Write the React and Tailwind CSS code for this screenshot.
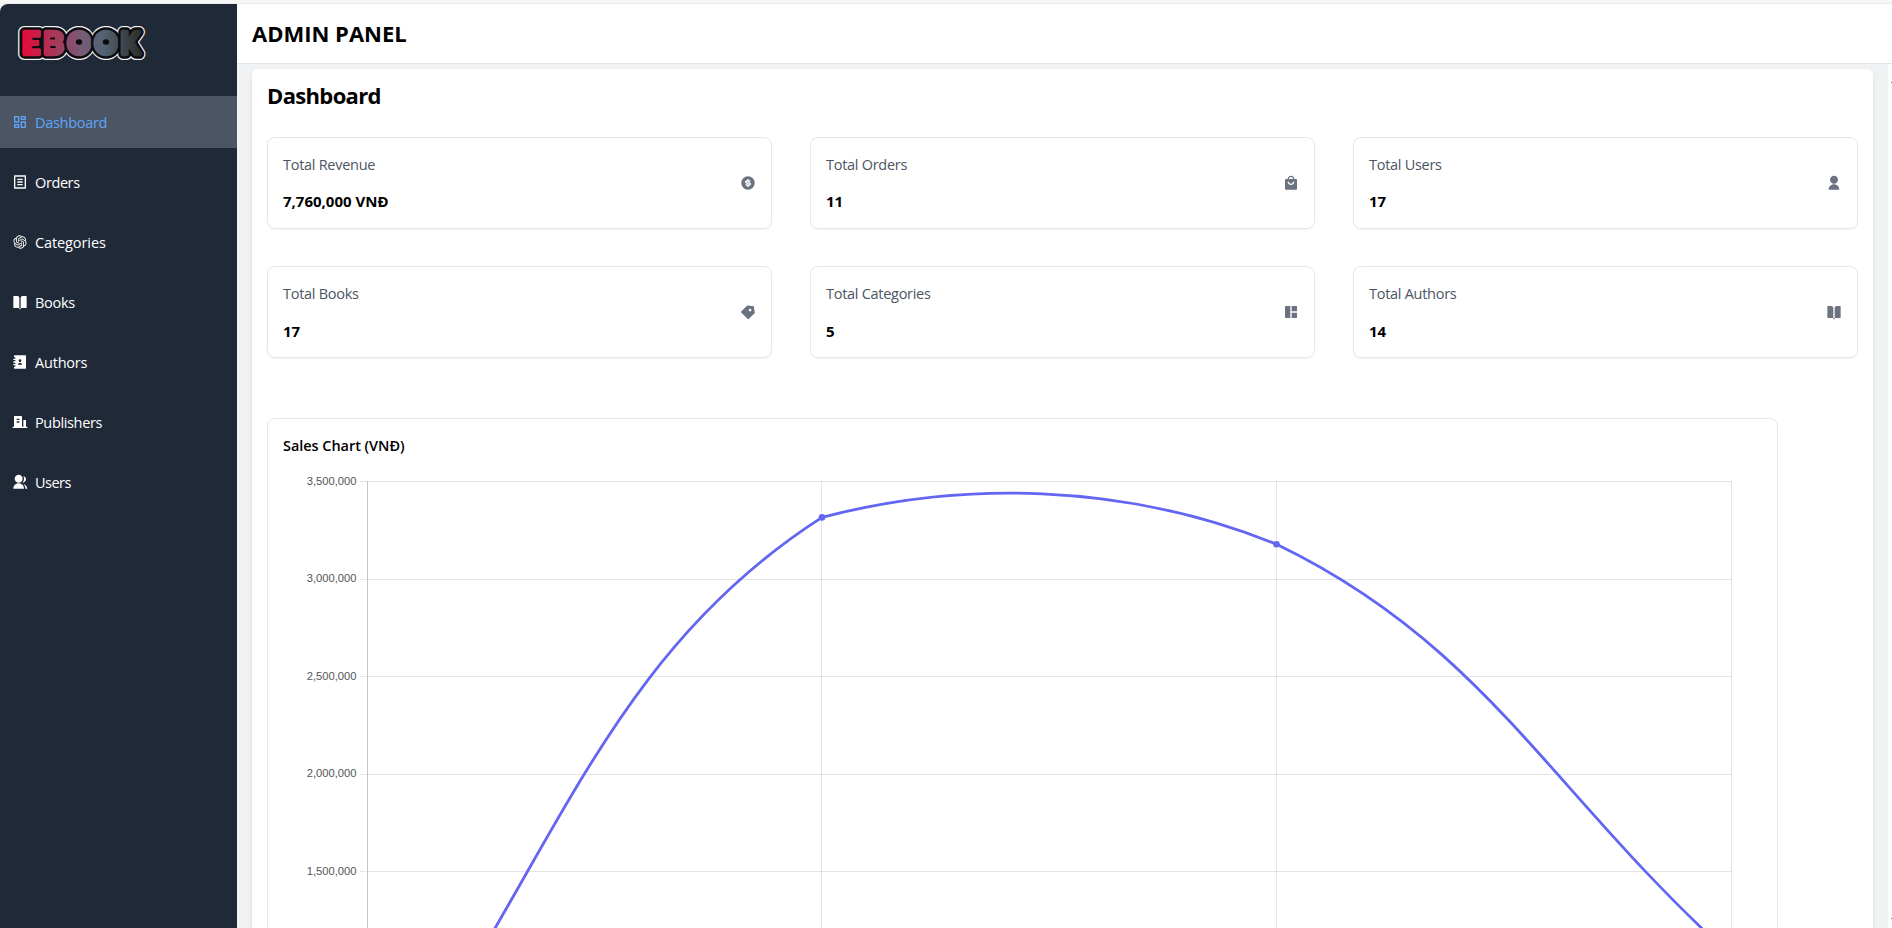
import {
  RiDashboardLine,
  RiFileListLine,
  RiOpenaiFill,
  RiBookOpenFill,
  RiContactsBook3Fill,
  RiBuildingFill,
  RiGroupFill,
  RiMoneyDollarCircleFill,
  RiShoppingBag4Fill,
  RiUserFill,
  RiPriceTag3Fill,
  RiLayout2Fill,
} from "react-icons/ri";

const navItems = [
  { label: "Dashboard", icon: RiDashboardLine, active: true, tracking: "tracking-[-0.3px]" },
  { label: "Orders", icon: RiFileListLine, tracking: "tracking-[-0.4px]" },
  { label: "Categories", icon: RiOpenaiFill, tracking: "tracking-[-0.1px]" },
  { label: "Books", icon: RiBookOpenFill, tracking: "tracking-[-0.3px]" },
  { label: "Authors", icon: RiContactsBook3Fill, tracking: "tracking-[-0.2px]" },
  { label: "Publishers", icon: RiBuildingFill, tracking: "tracking-[-0.35px]" },
  { label: "Users", icon: RiGroupFill, tracking: "tracking-[-0.5px]" },
];

const stats = [
  { label: "Total Revenue", value: "7,760,000 VNĐ", icon: RiMoneyDollarCircleFill },
  { label: "Total Orders", value: "11", icon: RiShoppingBag4Fill },
  { label: "Total Users", value: "17", icon: RiUserFill },
  { label: "Total Books", value: "17", icon: RiPriceTag3Fill },
  { label: "Total Categories", value: "5", icon: RiLayout2Fill },
  { label: "Total Authors", value: "14", icon: RiBookOpenFill },
];

const logoLetters = [
  { char: "E", x: 22, width: 18 },
  { char: "B", x: 43.5, width: 20 },
  { char: "O", x: 67.5, width: 23 },
  { char: "O", x: 94.5, width: 23 },
  { char: "K", x: 120.5, width: 19 },
];

function LogoLetter({ letter, ...props }) {
  return (
    <text x={letter.x} y="53.5" textLength={letter.width} lengthAdjust="spacingAndGlyphs" {...props}>
      {letter.char}
    </text>
  );
}

function Logo() {
  return (
    <svg width="160" height="92" viewBox="0 4 160 92" className="block font-['Lato',sans-serif] text-[30px] font-black">
      <defs>
        <linearGradient id="logo" gradientUnits="userSpaceOnUse" x1="20" y1="0" x2="143" y2="0">
          <stop offset="0" stopColor="#ea0638" />
          <stop offset="0.3" stopColor="#a33b5b" />
          <stop offset="0.52" stopColor="#735d78" />
          <stop offset="0.68" stopColor="#526372" />
          <stop offset="1" stopColor="#2b2a26" />
        </linearGradient>
      </defs>
      <g strokeLinejoin="round" fill="#f4f4f4" stroke="#f4f4f4" strokeWidth="12">
        {logoLetters.map((l, i) => (
          <LogoLetter key={i} letter={l} />
        ))}
      </g>
      <g strokeLinejoin="round" aria-hidden="true">
        {logoLetters.map((l, i) => (
          <g key={i}>
            <LogoLetter letter={l} fill="#0b0b0f" stroke="#0b0b0f" strokeWidth="9.5" />
            <LogoLetter letter={l} fill="url(#logo)" stroke="url(#logo)" strokeWidth="4.5" />
          </g>
        ))}
      </g>
      <ellipse cx="79" cy="42.7" rx="5.500" ry="6.500" fill="url(#logo)" />
      <ellipse cx="106" cy="42.7" rx="5.500" ry="6.500" fill="url(#logo)" />
      <ellipse cx="79" cy="42" rx="3.2" ry="2.8" fill="#0b0b0f" />
      <ellipse cx="106" cy="42" rx="3.2" ry="2.8" fill="#0b0b0f" />
      <path d="M33.500 39h6M33.500 47h6M51 38.500h3M51 47h3.500" stroke="#0b0b0f" strokeWidth="2" strokeLinecap="round" />
    </svg>
  );
}

// Plot area geometry: chart top and the four category positions.
const PLOT_TOP = 481.5;
const TENSION = 0.4;
const points = [
  [367.5, 1126],
  [822, 517.4],
  [1276.5, 544.2],
  [1731.5, 956],
];

// Cubic spline through the points, control handles capped at the plot top.
function splinePath() {
  const dist = (a, b) => Math.hypot(a[0] - b[0], a[1] - b[1]);
  const cap = (y) => Math.max(PLOT_TOP, y);
  const handles = points.map((p, i) => {
    const a = points[Math.max(0, i - 1)];
    const b = points[Math.min(points.length - 1, i + 1)];
    const d1 = dist(a, p);
    const d2 = dist(p, b);
    const f = (TENSION * d1) / (d1 + d2);
    const g = (TENSION * d2) / (d1 + d2);
    return [
      [p[0] - f * (b[0] - a[0]), cap(p[1] - f * (b[1] - a[1]))],
      [p[0] + g * (b[0] - a[0]), cap(p[1] + g * (b[1] - a[1]))],
    ];
  });
  return points
    .map((p, i) => (i === 0 ? `M${p}` : `C${handles[i - 1][1]} ${handles[i][0]} ${p}`))
    .join("");
}

const ticks = [
  ["3,500,000", 481.5, 485],
  ["3,000,000", 579.5, 582],
  ["2,500,000", 676.5, 680],
  ["2,000,000", 774.5, 777],
  ["1,500,000", 871.5, 875],
];

function SalesChart() {
  return (
    <svg width="1478" height="462" viewBox="283 466 1478 462" className="block font-['Liberation_Sans',sans-serif] text-[11.2px]">
      {ticks.map(([label, y, baseline]) => (
        <g key={label}>
          <path d={`M360 ${y}H1732`} stroke="#e5e5e5" />
          <text x="356.5" y={baseline} textAnchor="end" fill="#555555">{label}</text>
        </g>
      ))}
      <path d="M821.5 481V928M1276.5 481V928M1731.5 481V928" stroke="#000000" strokeOpacity="0.1" />
      <path d="M367.5 481V928" stroke="#c6c6c6" />
      <path d={splinePath()} fill="none" stroke="#6366f1" strokeWidth="2.8" />
      <circle cx="822" cy="517.4" r="3.3" fill="#6366f1" />
      <circle cx="1276.5" cy="544.2" r="3.3" fill="#6366f1" />
    </svg>
  );
}

export default function App() {
  return (
    <div className="flex h-screen flex-col overflow-hidden bg-[#f6f6f6] font-['Open_Sans',sans-serif] text-black">
      <div className="h-1 shrink-0 border-b border-[#ececec]" />
      <div className="flex min-h-0 flex-1">
        <aside className="flex w-[237px] shrink-0 flex-col rounded-tl-lg bg-[#1f2937]">
          <Logo />
          <nav className="flex flex-col gap-2">
            {navItems.map(({ label, icon: Icon, active, tracking }) => (
              <a key={label} className={`flex h-[52px] items-center gap-[7px] pl-[12px] ${active ? "bg-[#4b5563] text-[#60a5fa]" : "text-white"}`}>
                <Icon className="mb-px size-4" />
                <span className={`pt-[2px] text-[14.5px] leading-5 ${tracking}`}>{label}</span>
              </a>
            ))}
          </nav>
        </aside>
        <div className="flex min-w-0 flex-1 flex-col">
          <header className="flex h-[60px] shrink-0 items-center border-b border-[#e2e4e7] bg-white pb-[2px] pl-[15px]">
            <h1 className="text-[22px] font-bold leading-7">ADMIN PANEL</h1>
          </header>
          <div className="flex min-h-0 flex-1 bg-[#f1f2f4]">
            <main className="min-w-0 flex-1 overflow-hidden px-[15px] pt-[5px]">
              <div className="min-h-[900px] rounded-md bg-white px-[15px] pt-[12px] shadow-md">
                <h2 className="text-[22px] font-bold leading-7 tracking-[-0.65px]">Dashboard</h2>
                <div className="mt-[28px] grid grid-cols-3 gap-x-[38px] gap-y-[37px]">
                  {stats.map(({ label, value, icon: Icon }, i) => (
                    <div key={label} className="flex h-[92px] items-center justify-between rounded-lg border border-[#e5e7eb] px-[15px] shadow-xs">
                      <div>
                        <p className="text-[14.5px] leading-[22px] tracking-[-0.28px] text-[#4b5563]">{label}</p>
                        <p className={`text-[15px] font-bold leading-[22px] ${i < 3 ? "mt-[14px] pb-px" : "mt-[15px]"}`}>{value}</p>
                      </div>
                      <Icon className="size-4 text-[#6b7280]" />
                    </div>
                  ))}
                </div>
                <section className="mt-[60px] h-[640px] w-[1511px] rounded-lg border border-[#e5e7eb] px-[15px] pt-[16px]">
                  <h3 className="text-[14.5px] font-semibold leading-[22px] tracking-[-0.05px]">Sales Chart (VNĐ)</h3>
                  <div className="mt-[9px]">
                    <SalesChart />
                  </div>
                </section>
              </div>
            </main>
            <div className="flex w-1 shrink-0 flex-col items-end justify-between bg-[#fcfcfc] pb-[9px] pt-[18px]">
              <span className="size-px bg-[#7a7a7a]" />
              <span className="size-px bg-[#7a7a7a]" />
            </div>
          </div>
        </div>
      </div>
    </div>
  );
}
